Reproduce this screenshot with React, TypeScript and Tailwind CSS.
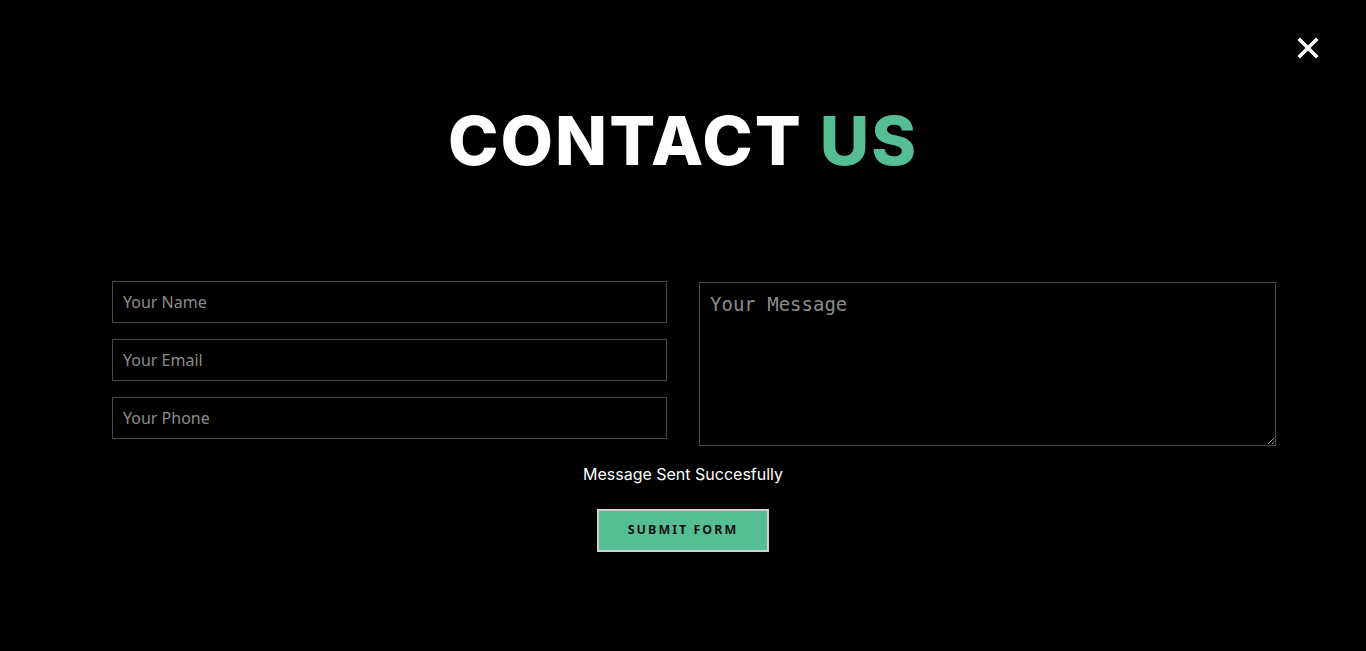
import React from "react";

export default function App() {
  return (
    <div className="w-[1366px] h-[651px] bg-black relative overflow-hidden font-['Open_Sans',sans-serif]">
      <button className="absolute left-[1297px] top-[37px] w-[22px] h-[22px] flex items-center justify-center">
        <svg width="22" height="22" viewBox="0 0 22 22">
          <path d="M3 3 L19 19 M19 3 L3 19" stroke="white" strokeWidth="3.6" strokeLinecap="square" />
        </svg>
      </button>
      <h1 className="pt-[98px] text-center text-[68px] leading-[84px] font-extrabold tracking-[2px] text-white font-['Inter','Noto_Sans',sans-serif]">
        CONTACT <span className="text-[#55be94]">US</span>
      </h1>
      <div className="mt-[99px] ml-[112px] flex gap-[32px]">
        <div className="w-[555px] flex flex-col gap-[16px]">
          {["Your Name", "Your Email", "Your Phone"].map((p) => (
            <input
              key={p}
              placeholder={p}
              className="h-[42px] border border-[#4a4a4a] bg-black px-[10px] text-[16px] text-white placeholder:text-[#8c8c8c] outline-none font-['Noto_Sans',sans-serif]"
            />
          ))}
        </div>
        <textarea
          placeholder="Your Message"
          className="mt-[1px] w-[577px] h-[164px] border border-[#4a4a4a] bg-black px-[10px] py-[7px] text-[19px] text-white placeholder:text-[#8c8c8c] outline-none font-['DejaVu_Sans_Mono',monospace]"
        />
      </div>
      <p className="mt-[16px] text-center text-[16px] leading-[24px] text-white font-['Inter','Noto_Sans',sans-serif]">
        Message Sent Succesfully
      </p>
      <div className="mt-[23px] flex justify-center">
        <button className="w-[172px] h-[43px] bg-[#55be94] border-2 border-[#d0d0d0] text-[12.5px] font-bold tracking-[2px] text-[#111] font-['Noto_Sans',sans-serif]">
          SUBMIT FORM
        </button>
      </div>
    </div>
  );
}
